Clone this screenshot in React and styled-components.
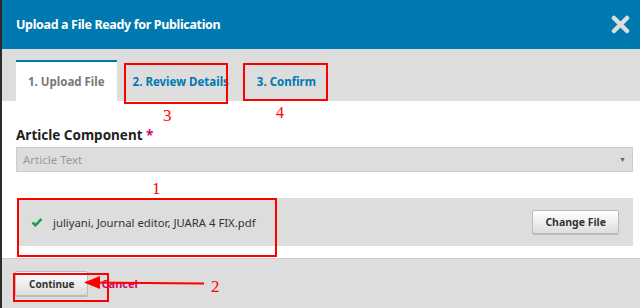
import styled, { createGlobalStyle } from "styled-components"

const GlobalStyle = createGlobalStyle`
    html, body {
        margin: 0;
        padding: 0;
        background: #2b2b2b;
    }
    body {
        font-family: "Noto Sans", "Open Sans", sans-serif;
    }
`;

const Page = styled.div`
    width: 640px;
    height: 308px;
    padding-left: 2px;
    box-sizing: border-box;
    background: #2b2b2b;
    overflow: hidden;
`;

const Modal = styled.div`
    position: relative;
    height: 100%;
    display: flex;
    flex-direction: column;
    background: #fff;
`;

const Header = styled.div`
    height: 49px;
    flex: none;
    display: flex;
    align-items: center;
    justify-content: space-between;
    padding: 0 10px 0 14px;
    background: #0078b0;
`;

const Title = styled.h1`
    margin: 0;
    font-size: 12.5px;
    font-weight: 700;
    color: #fff;
    letter-spacing: -0.35px;
`;

const Close = styled.div`
    width: 20px;
    height: 20px;
    display: flex;
    align-items: center;
    justify-content: center;
`;

const TabBar = styled.div`
    height: 52px;
    flex: none;
    display: flex;
    align-items: flex-end;
    padding-left: 14px;
    background: #ddd;
`;

const Tab = styled.div`
    height: 39px;
    padding: 0 12px;
    display: flex;
    align-items: center;
    font-size: 11.5px;
    font-weight: 700;
    color: ${props => props.active ? "#777" : "#0078b0"};
    background: ${props => props.active ? "#fff" : "transparent"};
    border-top: 2px solid ${props => props.active ? "#0078b0" : "transparent"};
    margin-right: 4px;
`;

const Body = styled.div`
    flex: 1;
    padding: 25px 7px 0 14px;
`;

const Label = styled.div`
    font-size: 13.5px;
    font-weight: 700;
    color: #222;
    line-height: 18px;
`;

const Required = styled.span`
    color: #d00a6c;
`;

const Select = styled.div`
    margin-top: 3px;
    height: 23px;
    display: flex;
    align-items: center;
    justify-content: space-between;
    padding: 0 6px 0 6px;
    background: #ddd;
    border: 1px solid #ccc;
    font-size: 11.5px;
    color: #999;
`;

const Caret = styled.span`
    font-size: 7px;
    color: #666;
`;

const FileRow = styled.div`
    margin-top: 26px;
    margin-left: 1px;
    height: 48px;
    display: flex;
    align-items: center;
    padding: 0 14px 0 14px;
    background: #ddd;
`;

const FileName = styled.div`
    flex: 1;
    margin-left: 10px;
    font-size: 11.3px;
    color: #333;
`;

const Button = styled.button`
    height: ${props => props.small ? "24px" : "25px"};
    padding: 0 ${props => props.small ? "12px" : "13px"};
    font-family: inherit;
    font-size: ${props => props.small ? "10.5px" : "10px"};
    font-weight: 700;
    color: #333;
    background: linear-gradient(#fff, #ddd);
    border: 1px solid #bbb;
    border-radius: 2px;
    box-shadow: 0 1px 0 #bbb;
`;

const Footer = styled.div`
    height: 49px;
    flex: none;
    display: flex;
    align-items: center;
    gap: 13px;
    padding-left: 13px;
    background: #ddd;
    border-top: 1px solid #ccc;
`;

const CancelLink = styled.span`
    font-size: 11px;
    font-weight: 700;
    color: #d00a6c;
`;

const Mark = styled.div`
    position: absolute;
    left: ${props => props.x}px;
    top: ${props => props.y}px;
    width: ${props => props.w}px;
    height: ${props => props.h}px;
    border: 2px solid #f00;
    box-sizing: border-box;
    pointer-events: none;
`;

const Num = styled.div`
    position: absolute;
    left: ${props => props.x}px;
    top: ${props => props.y}px;
    font-family: "Liberation Serif", serif;
    font-size: ${props => props.size || 17}px;
    line-height: 1;
    color: #f00;
`;

const Arrow = styled.svg`
    position: absolute;
    left: 80px;
    top: 274px;
`;

const App = () => {
  return (
    <Page>
        <GlobalStyle />
        <Modal>
            <Header>
                <Title>Upload a File Ready for Publication</Title>
                <Close>
                    <svg width="19" height="19" viewBox="0 0 19 19">
                        <path d="M3 3 L16 16 M16 3 L3 16" stroke="#ddd" strokeWidth="4.5" strokeLinecap="round" />
                    </svg>
                </Close>
            </Header>
            <TabBar>
                <Tab active>1. Upload File</Tab>
                <Tab>2. Review Details</Tab>
                <Tab>3. Confirm</Tab>
            </TabBar>
            <Body>
                <Label>Article Component <Required>*</Required></Label>
                <Select>
                    Article Text
                    <Caret>▼</Caret>
                </Select>
                <FileRow>
                    <svg width="12" height="10" viewBox="0 0 12 10">
                        <path d="M1.5 5.5 L4.5 8.3 L10.5 1.8" stroke="#17a34a" strokeWidth="2.6" fill="none" />
                    </svg>
                    <FileName>juliyani, Journal editor, JUARA 4 FIX.pdf</FileName>
                    <Button small>Change File</Button>
                </FileRow>
            </Body>
            <Footer>
                <Button>Continue</Button>
                <CancelLink>Cancel</CancelLink>
            </Footer>

            <Mark x={122} y={63} w={104} h={41} />
            <Mark x={241} y={63} w={85} h={38} />
            <Mark x={15} y={198} w={260} h={59} />
            <Mark x={11} y={273} w={96} h={29} />
            <Num x={161} y={107}>3</Num>
            <Num x={274} y={105} size={16}>4</Num>
            <Num x={150} y={180}>1</Num>
            <Num x={209} y={278}>2</Num>
            <Arrow width="125" height="18" viewBox="0 0 125 18">
                <path d="M4 8.5 L122 9.5" stroke="#f00" strokeWidth="2.2" />
                <path d="M2 8.5 L18 2 L18 15 Z" fill="#f00" />
            </Arrow>
        </Modal>
    </Page>
  )
}

export default App
